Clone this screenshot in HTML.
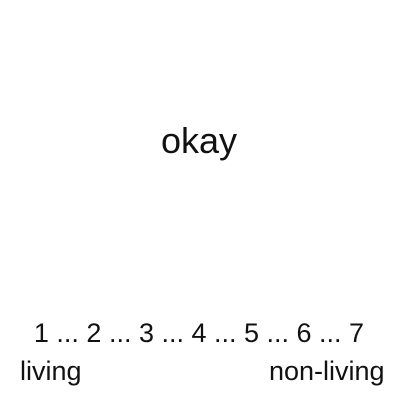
<html><head><style>
body{margin:0;width:400px;height:400px;background:#fff;position:relative;font-family:"Liberation Sans",Arial,sans-serif;color:#111;overflow:hidden}
div{position:absolute;white-space:pre;line-height:1}
</style></head><body>
<div style="left:0;width:398px;text-align:center;top:123px;font-size:36px">okay</div>
<div style="left:0;width:398px;text-align:center;top:320px;font-size:27px">1 ... 2 ... 3 ... 4 ... 5 ... 6 ... 7</div>
<div style="left:20px;top:358px;font-size:27px">living</div>
<div style="left:269px;top:358px;font-size:27px">non-living</div>
</body></html>
